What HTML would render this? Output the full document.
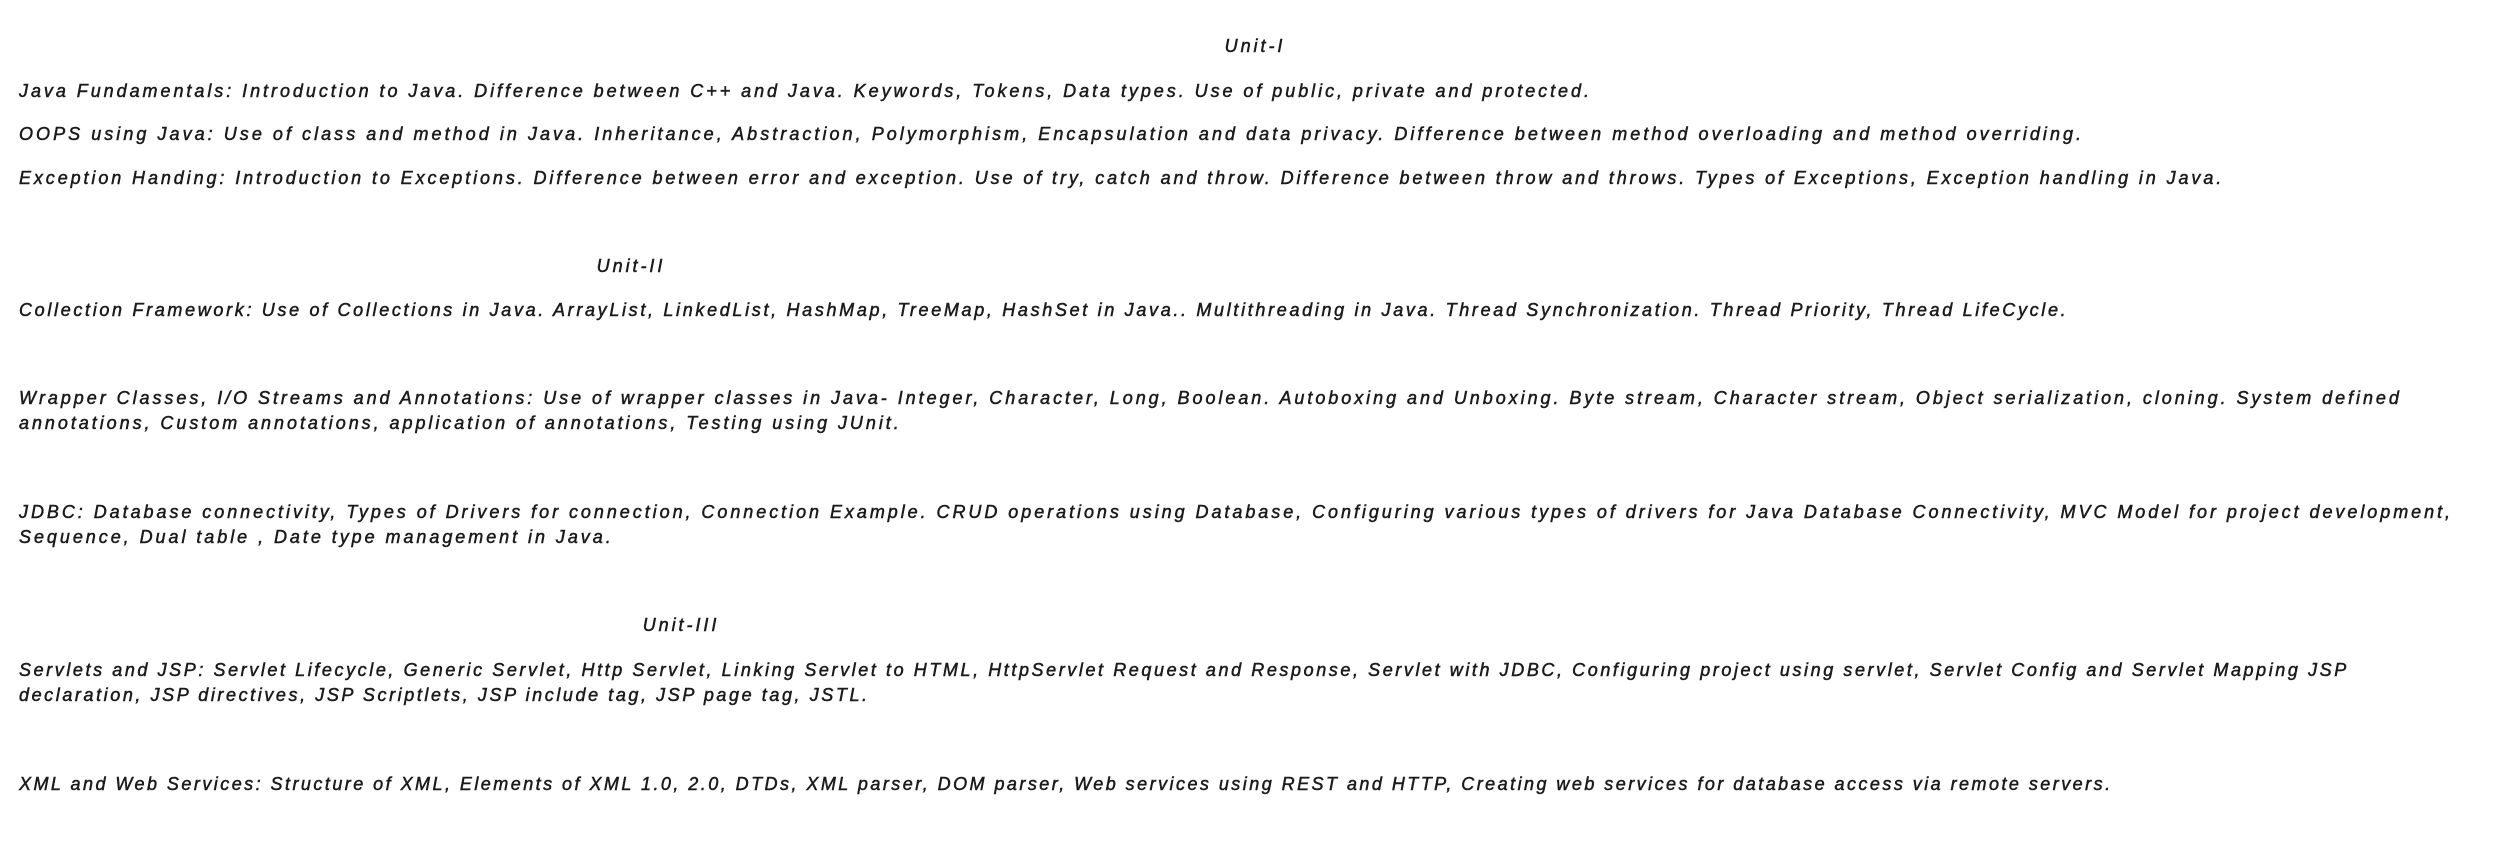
<!DOCTYPE html>
<html><head><meta charset="utf-8"><style>
html,body{margin:0;padding:0;background:#fff;width:2494px;height:858px;overflow:hidden}
.l{position:absolute;left:19px;white-space:nowrap;font-family:"Liberation Sans",sans-serif;font-style:italic;font-size:18px;line-height:25px;color:#1a1a1a;letter-spacing:2.95px;-webkit-text-stroke:0.5px #1a1a1a}
.c{transform:translateX(-50%)}
</style></head><body>
<div class="l c" style="left:1255px;top:34px">Unit-I</div>
<div class="l" style="top:79px">Java Fundamentals: Introduction to Java. Difference between C++ and Java. Keywords, Tokens, Data types. Use of public, private and protected.</div>
<div class="l" style="top:122px;letter-spacing:3.04px">OOPS using Java: Use of class and method in Java. Inheritance, Abstraction, Polymorphism, Encapsulation and data privacy. Difference between method overloading and method overriding.</div>
<div class="l" style="top:166px;letter-spacing:2.9px">Exception Handing: Introduction to Exceptions. Difference between error and exception. Use of try, catch and throw. Difference between throw and throws. Types of Exceptions, Exception handling in Java.</div>
<div class="l c" style="left:631px;top:254px">Unit-II</div>
<div class="l" style="top:298px;letter-spacing:2.67px">Collection Framework: Use of Collections in Java. ArrayList, LinkedList, HashMap, TreeMap, HashSet in Java.. Multithreading in Java. Thread Synchronization. Thread Priority, Thread LifeCycle.</div>
<div class="l" style="top:386px">Wrapper Classes, I/O Streams and Annotations: Use of wrapper classes in Java- Integer, Character, Long, Boolean. Autoboxing and Unboxing. Byte stream, Character stream, Object serialization, cloning. System defined<br>annotations, Custom annotations, application of annotations, Testing using JUnit.</div>
<div class="l" style="top:500px">JDBC: Database connectivity, Types of Drivers for connection, Connection Example. CRUD operations using Database, Configuring various types of drivers for Java Database Connectivity, MVC Model for project development,<br>Sequence, Dual table , Date type management in Java.</div>
<div class="l c" style="left:681px;top:613px">Unit-III</div>
<div class="l" style="top:658px;letter-spacing:2.58px">Servlets and JSP: Servlet Lifecycle, Generic Servlet, Http Servlet, Linking Servlet to HTML, HttpServlet Request and Response, Servlet with JDBC, Configuring project using servlet, Servlet Config and Servlet Mapping JSP<br>declaration, JSP directives, JSP Scriptlets, JSP include tag, JSP page tag, JSTL.</div>
<div class="l" style="top:772px;letter-spacing:2.46px">XML and Web Services: Structure of XML, Elements of XML 1.0, 2.0, DTDs, XML parser, DOM parser, Web services using REST and HTTP, Creating web services for database access via remote servers.</div>
</body></html>
